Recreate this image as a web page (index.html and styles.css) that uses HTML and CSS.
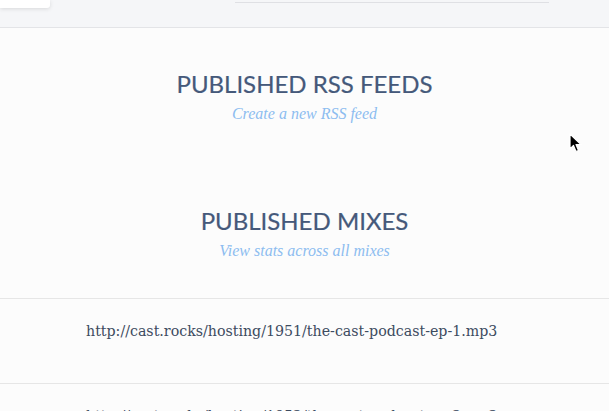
FILE: index.html
```html
<!DOCTYPE html>
<html lang="en">
<head>
  <meta charset="UTF-8">
  <title>Published</title>
  <link rel="stylesheet" href="styles.css">
</head>
<body>
  <div class="topbar">
    <div class="account-card"></div>
    <div class="search-line"></div>
  </div>

  <div class="content">
    <section class="block rss">
      <h2>PUBLISHED RSS FEEDS</h2>
      <a class="sub-link" href="#">Create a new RSS feed</a>
    </section>

    <section class="block mixes">
      <h2>PUBLISHED MIXES</h2>
      <a class="sub-link" href="#">View stats across all mixes</a>
    </section>

    <ul class="mix-list">
      <li>http://cast.rocks/hosting/1951/the-cast-podcast-ep-1.mp3</li>
      <li>http://cast.rocks/hosting/1952/the-cast-podcast-ep-2.mp3</li>
    </ul>
  </div>

  <!-- mouse pointer in the capture -->
  <svg class="pointer" width="14" height="20" viewBox="0 0 14 20">
    <path d="M1 1 L1 16 L4.5 12.5 L7 18.5 L9.5 17.5 L7 11.5 L12 11.5 Z" fill="#000" stroke="#fff" stroke-width="1.2" stroke-linejoin="round"/>
  </svg>
</body>
</html>
```

FILE: styles.css
```css
body {
  margin: 0;
  background: #fcfcfc;
  font-family: "Liberation Serif", serif;
  overflow: hidden;
}

.topbar {
  height: 27px;
  background: #f5f6f8;
  border-bottom: 1px solid #e3e4e7;
  display: flex;
  align-items: flex-start;
}

.account-card {
  width: 50px;
  height: 8px;
  background: #fff;
  border-radius: 0 0 3px 0;
  box-shadow: 0 1px 4px rgba(0, 0, 0, 0.12);
}

.search-line {
  width: 314px;
  height: 1px;
  margin-top: 1px;
  margin-left: 185px;
  border-bottom: 1px solid #dfe0e4;
}

.block {
  text-align: center;
}

.block h2 {
  margin: 0;
  font-family: Lato, sans-serif;
  font-weight: 400;
  font-size: 24px;
  line-height: 30px;
  color: #45597a;
  -webkit-text-stroke: 0.2px #45597a;
}

.sub-link {
  display: block;
  margin-top: 5px;
  font-style: italic;
  font-size: 16px;
  line-height: 20px;
  color: #8dbcf0;
  text-decoration: none;
}

.rss {
  padding-top: 41px;
  height: 137px;
}

.mixes {
  height: 92px;
}

.mix-list {
  list-style: none;
  margin: 0;
  padding: 0;
}

.mix-list li {
  border-top: 1px solid #e6e6e6;
  height: 85px;
  padding-left: 86px;
  padding-top: 22px;
  line-height: 20px;
  font-family: "DejaVu Serif", serif;
  font-size: 14.2px;
  color: #3d4b60;
  box-sizing: border-box;
}

.pointer {
  position: absolute;
  left: 569px;
  top: 133px;
}
```
